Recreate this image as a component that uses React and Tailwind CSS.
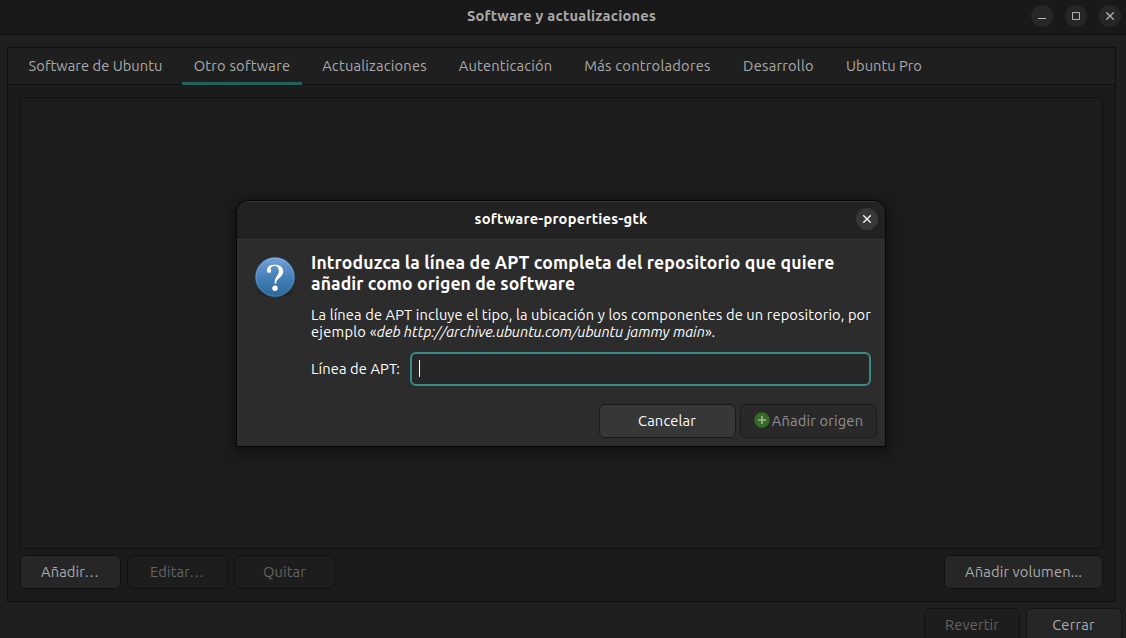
const tabs = [
  { label: "Software de Ubuntu", box: "w-[158px] pl-px tracking-[0.05px]" },
  { label: "Otro software", box: "w-[120px] tracking-[0.24px]", active: true },
  { label: "Actualizaciones", box: "w-[129px] tracking-[0.22px]" },
  { label: "Autenticación", box: "w-[117px] tracking-[0.18px]" },
  { label: "Más controladores", box: "w-[151px] tracking-[0.25px]" },
  { label: "Desarrollo", box: "w-[95px] tracking-[0.25px]" },
  { label: "Ubuntu Pro", box: "w-[100px] tracking-[0.01px]" },
];

function Button({ children, disabled, className }) {
  return (
    <button
      className={`flex h-[34px] shrink-0 items-center justify-center whitespace-nowrap rounded-md border border-[#121212] pb-px tracking-[0.15px] ${
        disabled ? "bg-[#1d1d1d] text-[#636363]" : "bg-[#262626] text-[#ababab]"
      } ${className}`}
    >
      {children}
    </button>
  );
}

function WindowButton({ children }) {
  return (
    <button className="flex size-[22px] items-center justify-center rounded-full bg-[#262626] text-[#b4b4b4]">
      {children}
    </button>
  );
}

function CloseIcon() {
  return (
    <svg width="8" height="8" viewBox="0 0 8 8" fill="none" stroke="currentColor" strokeWidth="1.3">
      <path d="M0.3 0.3 7.7 7.7M7.7 0.3 0.3 7.7" />
    </svg>
  );
}

function QuestionIcon() {
  return (
    <svg className="size-[48px] shrink-0" viewBox="0 0 48 48">
      <defs>
        <linearGradient id="ball" x1="0" y1="0" x2="0" y2="1">
          <stop offset="0" stopColor="#759fd9" />
          <stop offset="0.5" stopColor="#4681b8" />
          <stop offset="1" stopColor="#2a6899" />
        </linearGradient>
        <linearGradient id="rim" x1="0" y1="0" x2="0" y2="1">
          <stop offset="0" stopColor="#8fb4e4" />
          <stop offset="1" stopColor="#3c7cb0" />
        </linearGradient>
        <radialGradient id="shade">
          <stop offset="0.5" stopColor="#000" stopOpacity="0.3" />
          <stop offset="1" stopColor="#000" stopOpacity="0" />
        </radialGradient>
      </defs>
      <ellipse cx="24" cy="39" rx="21" ry="6" fill="url(#shade)" />
      <circle cx="24" cy="24" r="19.9" fill="#2c6697" />
      <circle cx="24" cy="24" r="18.9" fill="url(#ball)" stroke="url(#rim)" strokeWidth="1" />
      <path
        d="M16 18.2C15.6 13.6 19 11.7 24 11.7c5 0 8.200 2.500 8.200 6.700 0 3.100-1.900 4.900-3.900 6.600-1.900 1.600-3 2.800-3.200 5.800h-1.400c-.3-3.600.6-5.500 1.900-7.300 1.200-1.700 2.300-2.900 2.300-5.300 0-3.200-1.700-5.100-4.300-5.100-2.400 0-4 1-4 2.300 0 1 .6 1.500.6 2.500 0 1.200-.8 1.900-1.900 1.900-1.300 0-2.100-.4-2.300-1.600Z"
        fill="#fff"
      />
      <circle cx="24" cy="35.300" r="2.700" fill="#fff" />
    </svg>
  );
}

function Dialog() {
  return (
    <div className="absolute left-[237px] top-[201px] h-[245px] w-[648px] rounded-t-[12px] text-white shadow-[0_0_0_1px_#060606,0_3px_14px_3px_rgba(0,0,0,0.45)]">
      <div className="flex h-full flex-col overflow-hidden rounded-t-[12px] bg-[#2c2c2c]">
        <div className="grid h-[37px] shrink-0 grid-cols-[1fr_auto_1fr] items-center border-b border-[#191919] bg-[#222222] px-[7px] shadow-[inset_0_1px_0_#363636]">
          <span className="col-start-2 pb-[2px] font-bold tracking-[0.25px]">software-properties-gtk</span>
          <button className="flex size-[22px] items-center justify-center justify-self-end rounded-full bg-[#383838]">
            <CloseIcon />
          </button>
        </div>
        <div className="flex gap-[12px] px-[14px] pt-[14px]">
          <div className="pt-px">
            <QuestionIcon />
          </div>
          <div className="flex w-[560px] flex-col whitespace-nowrap">
            <h1 className="text-[17.6px] font-bold leading-[21px] tracking-[0.14px]">
              Introduzca la línea de APT completa del repositorio que quiere
              <br />
              <span className="tracking-[0.08px]">añadir como origen de software</span>
            </h1>
            <p className="mt-[12px] leading-[17px] tracking-[0.119px]">
              La línea de APT incluye el tipo, la ubicación y los componentes de un repositorio, por
              <br />
              <span className="tracking-[0.25px]">ejemplo «</span>
              <i className="tracking-normal">deb http://archive.ubuntu.com/ubuntu jammy main</i>
              <span className="tracking-[-0.2px]">».</span>
            </p>
            <label className="mt-[12px] flex items-center">
              <span className="w-[99px] pb-[2px] tracking-[0.12px]">Línea de APT:</span>
              <span className="flex h-[34px] w-[461px] items-center rounded-md border-2 border-[#3a8a85] bg-[#272727] pb-px pl-[7px]">
                <span className="h-[17px] w-px bg-white" />
              </span>
            </label>
          </div>
        </div>
        <div className="mt-[18px] flex justify-end gap-[4px] pr-[8px]">
          <button className="flex h-[34px] w-[137px] items-center justify-center rounded-md border border-[#1b1b1b] bg-[#373737] pb-px pr-px tracking-[0.15px]">
            Cancelar
          </button>
          <button className="flex h-[34px] w-[137px] items-center justify-center gap-[2px] rounded-md border border-[#1b1b1b] bg-[#292929] pb-px tracking-[0.18px] text-[#919191]">
            <svg className="mb-px" width="16" height="16" viewBox="0 0 16 16">
              <circle cx="8" cy="8" r="7.700" fill="#356b24" />
              <path d="M8 4v8M4 8h8" stroke="#a3b39e" strokeWidth="1.600" />
            </svg>
            Añadir origen
          </button>
        </div>
      </div>
    </div>
  );
}

export default function App() {
  return (
    <div className="relative flex h-[638px] w-[1126px] flex-col overflow-hidden bg-[#1f1f1f] font-[Ubuntu,'Noto_Sans',sans-serif] text-[14.667px] leading-[17px] text-[#ababab]">
      <header className="grid h-[35px] shrink-0 grid-cols-[1fr_auto_1fr] items-center border-b border-[#111111] bg-[#191919] pb-[2px] pr-[5px]">
        <span className="col-start-2 ml-[2px] pb-[2px] font-bold tracking-[0.22px]">Software y actualizaciones</span>
        <div className="flex gap-[12px] justify-self-end">
          <WindowButton>
            <svg width="8" height="8" viewBox="0 0 8 8">
              <path d="M0 6h8v1H0z" fill="currentColor" />
            </svg>
          </WindowButton>
          <WindowButton>
            <svg width="8" height="8" viewBox="0 0 8 8" fill="none" stroke="currentColor">
              <path d="M.5.5h7v7h-7z" />
            </svg>
          </WindowButton>
          <WindowButton>
            <CloseIcon />
          </WindowButton>
        </div>
      </header>

      <main className="ml-[7px] mt-[12px] flex h-[555px] w-[1109px] shrink-0 flex-col border border-[#111111] bg-[#1b1b1b]">
        <nav className="flex h-[37px] shrink-0 gap-[8px] border-b border-[#111111] bg-[#1f1f1f] pl-[8px]">
          {tabs.map((tab) => (
            <div
              key={tab.label}
              className={`-mb-px flex shrink-0 items-center justify-center whitespace-nowrap border-b-3 ${
                tab.active ? "border-[#235f5b]" : "border-transparent"
              } ${tab.box}`}
            >
              {tab.label}
            </div>
          ))}
        </nav>
        <div className="flex grow flex-col p-[12px]">
          <div className="h-[452px] shrink-0 border border-[#111111] bg-[#1c1c1c]" />
          <div className="mt-[6px] flex gap-[6px]">
            <Button className="w-[101px] pr-px">Añadir…</Button>
            <Button className="w-[101px] pr-px" disabled>
              Editar…
            </Button>
            <Button className="w-[101px]" disabled>
              Quitar
            </Button>
            <Button className="ml-auto w-[159px]">Añadir volumen...</Button>
          </div>
        </div>
      </main>

      <footer className="mt-[6px] flex justify-end gap-[6px] pr-[4px]">
        <Button className="w-[96px]" disabled>
          Revertir
        </Button>
        <Button className="w-[96px] pr-px tracking-[0.25px]">Cerrar</Button>
      </footer>

      <Dialog />
    </div>
  );
}
